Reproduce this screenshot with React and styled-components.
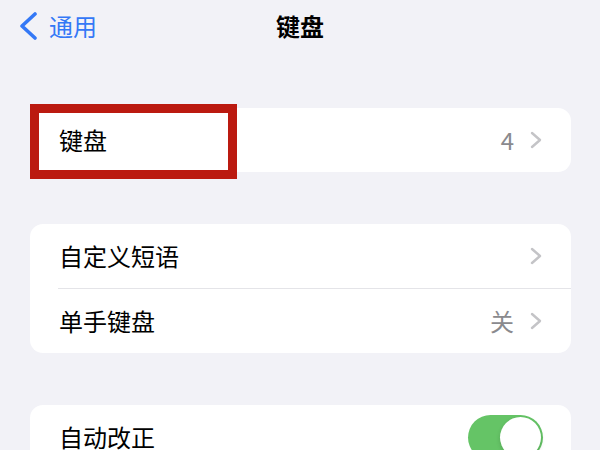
import React from 'react'
import styled, { createGlobalStyle } from 'styled-components'

const GlobalStyle = createGlobalStyle`
  html, body {
    margin: 0;
    padding: 0;
    background: #f2f2f7;
    font-family: "Noto Sans CJK SC", "Noto Sans", sans-serif;
    -webkit-font-smoothing: antialiased;
  }
`

const Screen = styled.div`
  width: 600px;
  height: 450px;
  overflow: hidden;
  background: #f2f2f7;
`

const NavBar = styled.div`
  height: 52px;
  display: grid;
  grid-template-columns: 1fr auto 1fr;
  align-items: center;
  padding: 0 19px;
`

const BackButton = styled.div`
  display: flex;
  align-items: center;
  gap: 12px;
  color: #3478f6;
  font-size: 24px;
  line-height: 1;
`

const Title = styled.div`
  font-size: 24px;
  font-weight: 600;
  color: #000;
  line-height: 1;
`

const Content = styled.div`
  padding: 56px 29px 0 30px;
  display: flex;
  flex-direction: column;
  gap: 52px;
`

const Card = styled.div`
  position: relative;
  background: #fff;
  border-radius: 13px;
`

const Row = styled.div`
  height: 64px;
  display: flex;
  align-items: center;
  padding: 0 29px 0 29px;
  position: relative;
  & + & {
    border-top: 1px solid #e4e4e8;
  }
  & + &::before {
    content: '';
  }
`

const Label = styled.div`
  flex: 1;
  font-size: 24px;
  color: #000;
  line-height: 1;
`

const Value = styled.div`
  font-size: 24px;
  color: #8a8a8e;
  line-height: 1;
  margin-right: 16px;
`

const Toggle = styled.div`
  width: 75px;
  height: 45px;
  border-radius: 23px;
  background: ${p => (p.on ? '#65c466' : '#e9e9eb')};
  display: flex;
  align-items: center;
  justify-content: ${p => (p.on ? 'flex-end' : 'flex-start')};
  padding: 2px;
  box-sizing: border-box;
  margin-right: -1px;
`

const Knob = styled.div`
  width: 41px;
  height: 41px;
  border-radius: 50%;
  background: #fff;
  box-shadow: 0 2px 4px rgba(0, 0, 0, 0.15);
`

const Highlight = styled.div`
  position: absolute;
  left: 0;
  top: -4px;
  width: 207px;
  height: 75px;
  border: 9px solid #bb1a10;
  box-sizing: border-box;
  pointer-events: none;
`

const Indent = styled.div`
  position: absolute;
  left: 0;
  top: -1px;
  width: 28px;
  height: 1px;
  background: #fff;
`

const BackChevron = () => (
  <svg width="18" height="28" viewBox="0 0 18 28">
    <path d="M16 2 L3 14 L16 26" fill="none" stroke="#3478f6" strokeWidth="3.6" strokeLinecap="round" strokeLinejoin="round" />
  </svg>
)

const Chevron = () => (
  <svg width="12" height="18" viewBox="0 0 12 18">
    <path d="M2 2 L10 9 L2 16" fill="none" stroke="#c4c4c7" strokeWidth="2.4" strokeLinecap="round" strokeLinejoin="round" />
  </svg>
)

const ListRow = ({ label, value, chevron, toggle, first }) => (
  <Row>
    {!first && <Indent />}
    <Label>{label}</Label>
    {value && <Value>{value}</Value>}
    {chevron && <Chevron />}
    {toggle !== undefined && (
      <Toggle on={toggle ? 1 : 0}>
        <Knob />
      </Toggle>
    )}
  </Row>
)

export default function App() {
  return (
    <Screen>
      <GlobalStyle />
      <NavBar>
        <BackButton>
          <BackChevron />
          通用
        </BackButton>
        <Title>键盘</Title>
        <div />
      </NavBar>
      <Content>
        <Card>
          <ListRow first label="键盘" value="4" chevron />
          <Highlight />
        </Card>
        <Card>
          <ListRow first label="自定义短语" chevron />
          <ListRow label="单手键盘" value="关" chevron />
        </Card>
        <Card>
          <ListRow first label="自动改正" toggle />
        </Card>
      </Content>
    </Screen>
  )
}
